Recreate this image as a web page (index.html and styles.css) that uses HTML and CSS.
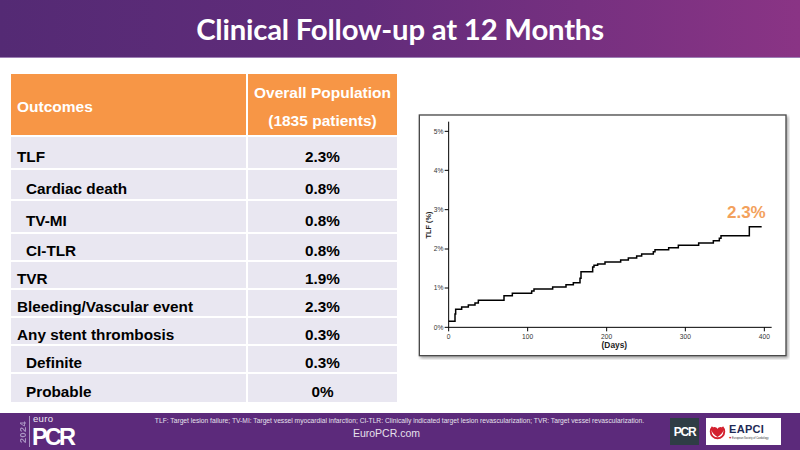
FILE: index.html
```html
<!DOCTYPE html>
<html lang="en">
<head>
<meta charset="utf-8">
<title>Clinical Follow-up at 12 Months</title>
<link rel="stylesheet" href="styles.css">
</head>
<body>
<header class="header">
  <h1 class="title">Clinical Follow-up at 12 Months</h1>
</header>
<main class="main">
  <table class="outcomes">
    <colgroup><col class="col-name"><col class="col-val"></colgroup>
    <thead>
      <tr><th class="h-name">Outcomes</th><th class="h-val">Overall Population<br>(1835 patients)</th></tr>
    </thead>
    <tbody>
      <tr class="tall"><td>TLF</td><td class="val">2.3%</td></tr>
      <tr class="mid"><td class="sub">Cardiac death</td><td class="val">0.8%</td></tr>
      <tr class="tall"><td class="sub">TV-MI</td><td class="val">0.8%</td></tr>
      <tr><td class="sub">CI-TLR</td><td class="val">0.8%</td></tr>
      <tr><td>TVR</td><td class="val">1.9%</td></tr>
      <tr><td>Bleeding/Vascular event</td><td class="val">2.3%</td></tr>
      <tr><td>Any stent thrombosis</td><td class="val">0.3%</td></tr>
      <tr><td class="sub">Definite</td><td class="val">0.3%</td></tr>
      <tr class="last"><td class="sub">Probable</td><td class="val">0%</td></tr>
    </tbody>
  </table>
  <figure class="chart">
    <svg class="chart-svg" viewBox="0 0 1140 750" width="380" height="250" xmlns="http://www.w3.org/2000/svg">
      <defs>
        <filter id="sh" x="-5%" y="-5%" width="115%" height="115%">
          <feDropShadow dx="5" dy="6" stdDeviation="4" flood-color="#000" flood-opacity="0.35"/>
        </filter>
      </defs>
      <rect x="28" y="15" width="1100" height="722" fill="#fff" stroke="#4a4a4a" stroke-width="4" filter="url(#sh)"/>
      <g stroke="#000" stroke-width="3" fill="none">
        <line x1="116" y1="35" x2="116" y2="653"/>
        <line x1="116" y1="652" x2="1085" y2="652"/>
        <line x1="104" y1="652" x2="116" y2="652"/>
        <line x1="104" y1="534" x2="116" y2="534"/>
        <line x1="104" y1="417" x2="116" y2="417"/>
        <line x1="104" y1="299" x2="116" y2="299"/>
        <line x1="104" y1="181" x2="116" y2="181"/>
        <line x1="104" y1="64" x2="116" y2="64"/>
        <line x1="116" y1="652" x2="116" y2="664"/>
        <line x1="353" y1="652" x2="353" y2="664"/>
        <line x1="590" y1="652" x2="590" y2="664"/>
        <line x1="826" y1="652" x2="826" y2="664"/>
        <line x1="1063" y1="652" x2="1063" y2="664"/>
      </g>
      <g class="ytick" text-anchor="end">
        <text x="100" y="659">0%</text>
        <text x="100" y="541">1%</text>
        <text x="100" y="424">2%</text>
        <text x="100" y="306">3%</text>
        <text x="100" y="188">4%</text>
        <text x="100" y="71">5%</text>
      </g>
      <g class="xtick" text-anchor="middle">
        <text x="116" y="686">0</text>
        <text x="353" y="686">100</text>
        <text x="590" y="686">200</text>
        <text x="826" y="686">300</text>
        <text x="1063" y="686">400</text>
      </g>
      <text class="xlabel" x="613" y="713" text-anchor="middle">(Days)</text>
      <text class="ylabel" x="0" y="0" text-anchor="middle" transform="translate(64 345) rotate(-90)">TLF (%)</text>
      <path d="M116,634 H135 V612 H137 V598 H155 V591 H175 V585 H195 V579 H205 V571 H282 V557 H307 V550 H365 V543 H372 V537 H428 V531 H468 V524 H490 V518 H510 V505 H513 V485 H548 V471 H552 V466 H563 V462 H585 V456 H632 V450 H655 V444 H680 V438 H695 V432 H730 V425 H735 V419 H776 V413 H805 V406 H866 V399 H910 V392 H928 V385 H933 V377 H1018 V350 H1055" fill="none" stroke="#000" stroke-width="4.5"/>
      <text class="callout" x="1009" y="323" text-anchor="middle">2.3%</text>
    </svg>
  </figure>
</main>
<footer class="footer">
  <div class="brand">
    <span class="brand-year">2024</span>
    <span class="brand-name"><span class="brand-euro">euro</span><span class="brand-pcr">PCR</span></span>
  </div>
  <div class="foot-center">
    <p class="footnote">TLF: Target lesion failure; TV-MI: Target vessel myocardial infarction; CI-TLR: Clinically indicated target lesion revascularization; TVR: Target vessel revascularization.</p>
    <p class="site">EuroPCR.com</p>
  </div>
  <div class="partners">
    <span class="pcr-box">PCR</span>
    <span class="eapci-box">
      <svg class="eapci-heart" viewBox="0 0 20 20" width="17" height="17" xmlns="http://www.w3.org/2000/svg">
        <path d="M4.2,4.5 A8,8 0 1 0 15.8,4.5" fill="none" stroke="#d3202e" stroke-width="2.2"/>
        <path d="M10,16.5 C5,13 3.2,10.5 3.2,8.2 C3.2,6.2 4.7,4.8 6.5,4.8 C8,4.8 9.2,5.7 10,7 C10.8,5.7 12,4.8 13.5,4.8 C15.3,4.8 16.8,6.2 16.8,8.2 C16.8,10.5 15,13 10,16.5 Z" fill="#d3202e"/>
      </svg>
      <span class="eapci-text">
        <span class="eapci-name">EAPCI</span>
        <span class="eapci-sub"><span class="mini-heart">♥</span> European Society of Cardiology</span>
      </span>
    </span>
  </div>
</footer>
</body>
</html>
```
FILE: styles.css
```css
* { box-sizing: border-box; }
html, body { margin: 0; padding: 0; }
body {
  width: 800px;
  height: 450px;
  overflow: hidden;
  background: #fff;
  font-family: "Liberation Sans", Arial, sans-serif;
  display: flex;
  flex-direction: column;
}

.header {
  height: 58px;
  flex: none;
  background: linear-gradient(90deg, #542a74 0%, #622c7b 45%, #8a3485 100%);
  border-bottom: 1px solid #9d7fb5;
  display: flex;
  align-items: center;
  justify-content: center;
}
.title {
  margin: 0;
  color: #fff;
  font-family: Lato, "Open Sans", sans-serif;
  font-weight: 700;
  font-size: 29.3px;
  letter-spacing: -0.2px;
}

.main {
  height: 355px;
  flex: none;
  display: flex;
  align-items: flex-start;
}

.outcomes {
  margin: 16px 0 0 11px;
  width: 386px;
  border-collapse: separate;
  border-spacing: 0;
  table-layout: fixed;
}
.col-name { width: 237px; }
.col-val { width: 149px; }

.outcomes th {
  background: #f79646;
  color: #fff;
  font-weight: 700;
  font-size: 15.5px;
  line-height: 28px;
  height: 61px;
  padding: 5px 6px 0;
  border-bottom: 2px solid #fff;
  vertical-align: middle;
}
.h-name { text-align: left; border-right: 2px solid #fff; }
.h-val { text-align: center; }

.outcomes td {
  background: #e9e7f1;
  color: #000;
  font-weight: 700;
  font-size: 15.3px;
  line-height: 18px;
  height: 28px;
  padding: 8px 6px 0;
  border-bottom: 2px solid #fff;
  vertical-align: middle;
  white-space: nowrap;
}
.outcomes td:first-child { border-right: 2px solid #fff; }
.outcomes tr.tall td { height: 33px; }
.outcomes tr.mid td { height: 31px; }
.outcomes tr.last td { border-bottom: none; height: 28px; }
.outcomes td.sub { padding-left: 15px; }
.outcomes td.val { text-align: center; }

.chart {
  margin: 52px 0 0 13px;
  width: 380px;
  height: 250px;
}
.chart-svg { display: block; }
.ytick text, .xtick text {
  font-family: "Liberation Sans", Arial, sans-serif;
  font-size: 20px;
  fill: #333;
}
.xlabel {
  font-family: "Liberation Sans", Arial, sans-serif;
  font-size: 25px;
  font-weight: 700;
  fill: #222;
}
.ylabel {
  font-family: "Liberation Sans", Arial, sans-serif;
  font-size: 22px;
  font-weight: 700;
  fill: #222;
}
.callout {
  font-family: "Liberation Sans", Arial, sans-serif;
  font-size: 51px;
  font-weight: 700;
  fill: #f3a15c;
}

.footer {
  height: 37px;
  flex: none;
  margin-top: auto;
  background: #5c2a7b;
  display: grid;
  grid-template-columns: 1fr auto 1fr;
  align-items: center;
  padding: 0 19px 0 18px;
}

.brand {
  display: flex;
  align-items: center;
  height: 37px;
}
.brand-year {
  writing-mode: vertical-rl;
  transform: rotate(180deg);
  font-size: 9px;
  font-weight: 700;
  letter-spacing: 0.5px;
  color: #a994c2;
  padding-left: 1px;
  border-left: 1px solid #a994c2;
  margin-right: 3px;
  height: 31px;
  text-align: center;
}
.brand-name {
  display: flex;
  flex-direction: column;
  color: #fff;
}
.brand-euro {
  font-size: 9.5px;
  line-height: 11px;
  color: #ece6f2;
  letter-spacing: 0.3px;
}
.brand-pcr {
  font-size: 23.5px;
  line-height: 26px;
  font-weight: 700;
  letter-spacing: -2.8px;
  margin-left: -1px;
}

.foot-center {
  display: flex;
  flex-direction: column;
  align-items: center;
  align-self: start;
  padding-top: 3px;
}
.footnote {
  margin: 0;
  font-size: 6.7px;
  line-height: 9px;
  color: #e6e0ec;
  white-space: nowrap;
}
.site {
  margin: 1px 26px 0 0;
  font-size: 10.5px;
  line-height: 14px;
  color: #e6e0ec;
}

.partners {
  justify-self: end;
  display: flex;
  align-items: center;
  gap: 7px;
}
.pcr-box {
  width: 29px;
  height: 27px;
  background: #2f3d45;
  color: #fff;
  font-weight: 700;
  font-size: 12px;
  letter-spacing: -1.2px;
  display: flex;
  align-items: center;
  justify-content: center;
}
.eapci-box {
  width: 75px;
  height: 27px;
  background: #fff;
  display: flex;
  align-items: center;
  padding-left: 3px;
  gap: 3px;
}
.eapci-heart { display: block; flex: none; }
.eapci-text {
  display: flex;
  flex-direction: column;
}
.eapci-name {
  font-size: 11px;
  line-height: 12px;
  font-weight: 700;
  color: #1f2a55;
  letter-spacing: 0.3px;
}
.eapci-sub {
  font-size: 2.6px;
  line-height: 5px;
  color: #333;
  white-space: nowrap;
}
.mini-heart { color: #d3202e; font-size: 4px; }
```
